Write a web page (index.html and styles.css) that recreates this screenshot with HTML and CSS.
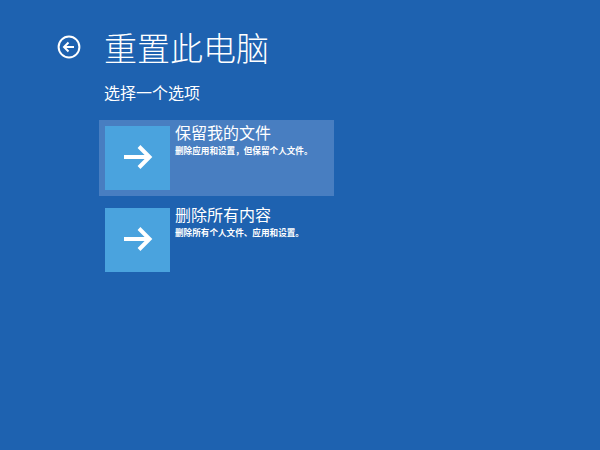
FILE: index.html
```html
<!DOCTYPE html>
<html lang="zh-CN">
<head>
<meta charset="utf-8">
<title>重置此电脑</title>
<link rel="stylesheet" href="styles.css">
</head>
<body>
<div class="page">
  <header class="header">
    <span class="back" aria-label="返回">
      <svg width="24" height="24" viewBox="0 0 24 24">
        <circle cx="12" cy="12" r="10.4" fill="none" stroke="#fff" stroke-width="2"/>
        <path d="M7 12 H17 M11.5 7.5 L7 12 L11.5 16.5" fill="none" stroke="#fff" stroke-width="2" stroke-linecap="butt" stroke-linejoin="miter"/>
      </svg>
    </span>
    <h1 class="title">重置此电脑</h1>
  </header>
  <main class="content">
    <p class="subtitle">选择一个选项</p>
    <div class="options">
      <div class="option option-active">
        <div class="tile">
          <svg width="30" height="26" viewBox="0 0 30 26">
            <path d="M1 13 H26 M16 2.5 L26.5 13 L16 23.5" fill="none" stroke="#fff" stroke-width="4"/>
          </svg>
        </div>
        <div class="text">
          <div class="opt-title">保留我的文件</div>
          <div class="opt-desc">删除应用和设置，但保留个人文件。</div>
        </div>
      </div>
      <div class="option">
        <div class="tile">
          <svg width="30" height="26" viewBox="0 0 30 26">
            <path d="M1 13 H26 M16 2.5 L26.5 13 L16 23.5" fill="none" stroke="#fff" stroke-width="4"/>
          </svg>
        </div>
        <div class="text">
          <div class="opt-title">删除所有内容</div>
          <div class="opt-desc">删除所有个人文件、应用和设置。</div>
        </div>
      </div>
    </div>
  </main>
</div>
</body>
</html>
```

FILE: styles.css
```css
html, body {
  margin: 0;
  padding: 0;
}
body {
  background: #1e62b0;
  color: #fff;
  font-family: "Noto Sans CJK SC", "Noto Sans", sans-serif;
  width: 600px;
  height: 450px;
  overflow: hidden;
}
.page {
  display: flex;
  flex-direction: column;
}
.header {
  display: flex;
  align-items: center;
  padding: 27px 0 0 57px;
  height: 40px;
}
.back {
  display: flex;
  width: 24px;
  height: 24px;
}
.title {
  margin: 0 0 0 23px;
  font-size: 33px;
  line-height: 40px;
  font-weight: 300;
}
.content {
  display: flex;
  flex-direction: column;
  padding-left: 99px;
}
.subtitle {
  margin: 15px 0 0 5px;
  font-size: 16px;
  line-height: 20px;
  font-weight: 400;
}
.options {
  display: flex;
  flex-direction: column;
  gap: 6px;
  margin-top: 18px;
}
.option {
  display: flex;
  width: 223px;
  padding: 6px;
  height: 64px;
}
.option-active {
  background: #487ec1;
}
.tile {
  width: 65px;
  height: 64px;
  background: #4aa3de;
  display: flex;
  align-items: center;
  justify-content: center;
  padding-bottom: 3px;
  box-sizing: border-box;
}
.text {
  display: flex;
  flex-direction: column;
  margin: -5.5px 0 0 5px;
}
.opt-title {
  font-size: 16px;
  line-height: 23px;
}
.opt-desc {
  font-size: 8.6px;
  line-height: 12.5px;
  font-weight: 700;
}
```
